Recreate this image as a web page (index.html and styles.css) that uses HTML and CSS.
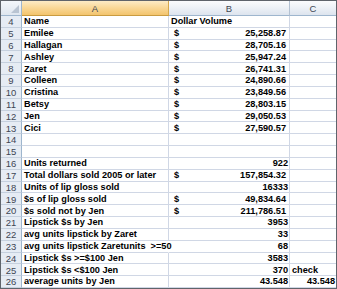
FILE: index.html
```html
<!DOCTYPE html>
<html>
<head>
<meta charset="utf-8">
<link rel="stylesheet" href="styles.css">
</head>
<body>
<div class="sheet">
  <div class="corner"><span class="tri"></span></div>
  <div class="colhead sel">A</div>
  <div class="colhead">B</div>
  <div class="colhead last">C</div>

  <div class="rh">4</div><div class="c">Name</div><div class="c">Dollar Volume</div><div class="c last"></div>
  <div class="rh">5</div><div class="c">Emilee</div><div class="c acct"><span>$</span><span>25,258.87</span></div><div class="c last"></div>
  <div class="rh">6</div><div class="c">Hallagan</div><div class="c acct"><span>$</span><span>28,705.16</span></div><div class="c last"></div>
  <div class="rh">7</div><div class="c">Ashley</div><div class="c acct"><span>$</span><span>25,947.24</span></div><div class="c last"></div>
  <div class="rh">8</div><div class="c">Zaret</div><div class="c acct"><span>$</span><span>26,741.31</span></div><div class="c last"></div>
  <div class="rh">9</div><div class="c">Colleen</div><div class="c acct"><span>$</span><span>24,890.66</span></div><div class="c last"></div>
  <div class="rh">10</div><div class="c">Cristina</div><div class="c acct"><span>$</span><span>23,849.56</span></div><div class="c last"></div>
  <div class="rh">11</div><div class="c">Betsy</div><div class="c acct"><span>$</span><span>28,803.15</span></div><div class="c last"></div>
  <div class="rh">12</div><div class="c">Jen</div><div class="c acct"><span>$</span><span>29,050.53</span></div><div class="c last"></div>
  <div class="rh">13</div><div class="c">Cici</div><div class="c acct"><span>$</span><span>27,590.57</span></div><div class="c last"></div>
  <div class="rh">14</div><div class="c"></div><div class="c"></div><div class="c last"></div>
  <div class="rh">15</div><div class="c"></div><div class="c"></div><div class="c last"></div>
  <div class="rh">16</div><div class="c">Units returned</div><div class="c num">922</div><div class="c last"></div>
  <div class="rh">17</div><div class="c">Total dollars sold 2005 or later</div><div class="c acct"><span>$</span><span>157,854.32</span></div><div class="c last"></div>
  <div class="rh">18</div><div class="c">Units of lip gloss sold</div><div class="c num">16333</div><div class="c last"></div>
  <div class="rh">19</div><div class="c">$s of lip gloss sold</div><div class="c acct"><span>$</span><span>49,834.64</span></div><div class="c last"></div>
  <div class="rh">20</div><div class="c">$s sold not by Jen</div><div class="c acct"><span>$</span><span>211,786.51</span></div><div class="c last"></div>
  <div class="rh">21</div><div class="c">Lipstick $s by Jen</div><div class="c num">3953</div><div class="c last"></div>
  <div class="rh">22</div><div class="c">avg units lipstick by Zaret</div><div class="c num">33</div><div class="c last"></div>
  <div class="rh">23</div><div class="c spill">avg units lipstick Zaretunits&nbsp;&nbsp;&gt;=50</div><div class="c num">68</div><div class="c last"></div>
  <div class="rh">24</div><div class="c">Lipstick $s &gt;=$100 Jen</div><div class="c num">3583</div><div class="c last"></div>
  <div class="rh">25</div><div class="c">Lipstick $s &lt;$100 Jen</div><div class="c num">370</div><div class="c last">check</div>
  <div class="rh">26</div><div class="c">average units by Jen</div><div class="c num">43.548</div><div class="c last num">43.548</div>
</div>
</body>
</html>
```
FILE: styles.css
```css
html, body {
  margin: 0;
  padding: 0;
  background: #ffffff;
}
.sheet {
  box-sizing: border-box;
  width: 337px;
  height: 289px;
  border: 1px solid #5f646b;
  display: grid;
  grid-template-columns: 21px 147px 121px 1fr;
  grid-template-rows: 15px repeat(23, minmax(0, 1fr));
  overflow: hidden;
  font-family: "Liberation Sans", Arial, sans-serif;
  line-height: 1;
}
.corner {
  position: relative;
  box-sizing: border-box;
  background: linear-gradient(#f4f7fb, #dfe6ef);
  border-right: 1px solid #9eb6ce;
  border-bottom: 1px solid #9eb6ce;
}
.tri {
  position: absolute;
  right: 2px;
  bottom: 2px;
  width: 0;
  height: 0;
  border-left: 8px solid transparent;
  border-bottom: 8px solid #b9c4d2;
}
.colhead {
  box-sizing: border-box;
  background: linear-gradient(#fbfcfd 0%, #eef2f7 45%, #dde4ee 100%);
  border-right: 1px solid #b3c1d2;
  border-bottom: 1px solid #9eb6ce;
  font-size: 9.5px;
  color: #3e4653;
  display: flex;
  align-items: center;
  justify-content: center;
  padding-top: 1px;
}
.colhead.sel {
  background: linear-gradient(#fcebc6 0%, #f9d99a 45%, #f3c46d 100%);
  border-right: 1px solid #d5a84d;
  border-bottom: 1px solid #c99b40;
}
.colhead.last {
  border-right: none;
}
.rh {
  box-sizing: border-box;
  background: #e6ecf4;
  border-right: 1px solid #9eb6ce;
  border-bottom: 1px solid #c5d0de;
  font-size: 9.5px;
  color: #3e4653;
  display: flex;
  align-items: center;
  justify-content: center;
  padding-top: 1px;
  min-height: 0;
}
.c {
  box-sizing: border-box;
  border-right: 1px solid #d0d7e5;
  border-bottom: 1px solid #d0d7e5;
  font-size: 9.2px;
  font-weight: bold;
  color: #000000;
  display: flex;
  align-items: center;
  padding: 1px 2px 0 2px;
  white-space: nowrap;
  min-width: 0;
  min-height: 0;
}
.c.last {
  border-right: none;
}
.spill {
  overflow: visible;
  border-right-color: transparent;
  position: relative;
  z-index: 1;
}
.num {
  justify-content: flex-end;
  padding-right: 1px;
}
.acct {
  justify-content: space-between;
  padding-left: 5px;
  padding-right: 3px;
}
```
